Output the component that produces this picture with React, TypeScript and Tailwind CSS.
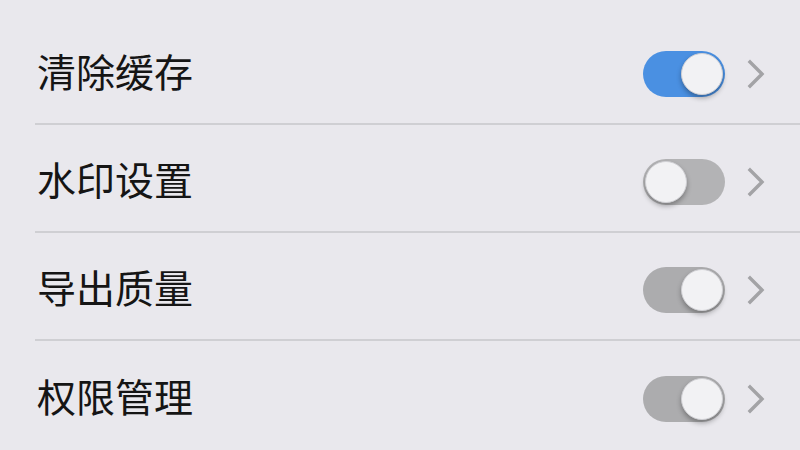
import React from "react";

type Row = { label: string; on: boolean; track: string };

const rows: Row[] = [
  { label: "清除缓存", on: true, track: "bg-[#4a90e2]" },
  { label: "水印设置", on: false, track: "bg-[#b3b3b5]" },
  { label: "导出质量", on: true, track: "bg-[#acacae]" },
  { label: "权限管理", on: true, track: "bg-[#acacae]" },
];

function Toggle({ on, track }: { on: boolean; track: string }) {
  return (
    <div
      className={`flex h-[46px] w-[82px] items-center rounded-full px-[2px] ${track} ${
        on ? "justify-end" : "justify-start"
      }`}
    >
      <div className="h-[42px] w-[42px] rounded-full border border-[#d0d0d4] bg-[#f2f2f4] shadow-[0_3px_5px_rgba(0,0,0,0.3)]" />
    </div>
  );
}

function Chevron() {
  return (
    <svg width="18" height="30" viewBox="0 0 18 30" fill="none">
      <path d="M3 3 L15 15 L3 27" stroke="#a3a3a6" strokeWidth="3.4" strokeLinecap="square" />
    </svg>
  );
}

export default function App() {
  return (
    <div
      className="h-[450px] w-[800px] overflow-hidden bg-[#e9e8ed] pt-[17px]"
      style={{ fontFamily: '"Noto Sans CJK SC", "Noto Sans", sans-serif' }}
    >
      {rows.map((row, i) => (
        <div key={row.label} className="ml-[35px]">
          <div
            className={`flex h-[108px] items-center pl-[2px] pr-[35px] ${
              i < rows.length - 1 ? "border-b-2 border-[#cfcfd3]" : ""
            }`}
          >
            <span className="flex-1 text-[39px] leading-none text-[#151515]">{row.label}</span>
            <div className="mt-[8px] flex items-center gap-[22px]">
              <Toggle on={row.on} track={row.track} />
              <Chevron />
            </div>
          </div>
        </div>
      ))}
    </div>
  );
}
